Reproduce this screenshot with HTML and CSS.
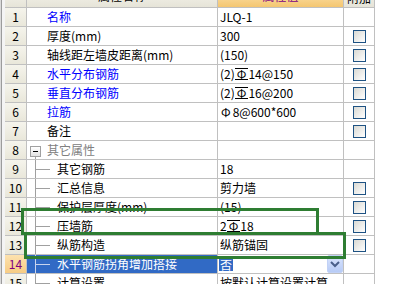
FILE: index.html
```html
<!DOCTYPE html>
<html lang="zh-CN">
<head>
  <meta charset="UTF-8">
  <title>属性编辑</title>
  <link rel="stylesheet" href="styles.css">
</head>
<body>
  <div class="frame">
    <div class="grid">
      <div class="row head">
        <div class="c num"></div>
        <div class="c name">属性名称</div>
        <div class="c val">属性值</div>
        <div class="c chk">附加</div>
      </div>
      <div class="row">
        <div class="c num">1</div>
        <div class="c name blue">名称</div>
        <div class="c val">JLQ-1</div>
        <div class="c chk"></div>
      </div>
      <div class="row">
        <div class="c num">2</div>
        <div class="c name">厚度(mm)</div>
        <div class="c val">300</div>
        <div class="c chk"><span class="box"></span></div>
      </div>
      <div class="row">
        <div class="c num">3</div>
        <div class="c name">轴线距左墙皮距离(mm)</div>
        <div class="c val">(150)</div>
        <div class="c chk"><span class="box"></span></div>
      </div>
      <div class="row">
        <div class="c num">4</div>
        <div class="c name blue">水平分布钢筋</div>
        <div class="c val">(2)<span class="bar">Φ</span>14@150</div>
        <div class="c chk"><span class="box"></span></div>
      </div>
      <div class="row">
        <div class="c num">5</div>
        <div class="c name blue">垂直分布钢筋</div>
        <div class="c val">(2)<span class="bar">Φ</span>16@200</div>
        <div class="c chk"><span class="box"></span></div>
      </div>
      <div class="row">
        <div class="c num">6</div>
        <div class="c name blue">拉筋</div>
        <div class="c val"><span class="phi">Φ</span>8@600*600</div>
        <div class="c chk"><span class="box"></span></div>
      </div>
      <div class="row">
        <div class="c num">7</div>
        <div class="c name">备注</div>
        <div class="c val"></div>
        <div class="c chk"><span class="box"></span></div>
      </div>
      <div class="row">
        <div class="c num">8</div>
        <div class="c name group"><span class="toggle"></span>其它属性</div>
        <div class="c val"></div>
        <div class="c chk"></div>
      </div>
      <div class="row">
        <div class="c num">9</div>
        <div class="c name child">其它钢筋</div>
        <div class="c val">18</div>
        <div class="c chk"></div>
      </div>
      <div class="row">
        <div class="c num">10</div>
        <div class="c name child">汇总信息</div>
        <div class="c val">剪力墙</div>
        <div class="c chk"><span class="box"></span></div>
      </div>
      <div class="row">
        <div class="c num">11</div>
        <div class="c name child">保护层厚度(mm)</div>
        <div class="c val">(15)</div>
        <div class="c chk"><span class="box"></span></div>
      </div>
      <div class="row">
        <div class="c num">12</div>
        <div class="c name child">压墙筋</div>
        <div class="c val">2<span class="bar">Φ</span>18</div>
        <div class="c chk"><span class="box"></span></div>
      </div>
      <div class="row">
        <div class="c num">13</div>
        <div class="c name child">纵筋构造</div>
        <div class="c val">纵筋锚固</div>
        <div class="c chk"><span class="box"></span></div>
      </div>
      <div class="row sel">
        <div class="c num">14</div>
        <div class="c name child">水平钢筋拐角增加搭接</div>
        <div class="c val edit">
          <span class="pick">否</span>
          <span class="drop">
            <svg width="10" height="7" viewBox="0 0 10 7"><polyline points="1,1 5,5 9,1" fill="none" stroke="#4a5f8a" stroke-width="2"/></svg>
          </span>
        </div>
        <div class="c chk"></div>
      </div>
      <div class="row">
        <div class="c num">15</div>
        <div class="c name child">计算设置</div>
        <div class="c val">按默认计算设置计算</div>
        <div class="c chk"></div>
      </div>
    </div>
    <div class="mark mark-a"></div>
    <div class="mark mark-b"></div>
  </div>
</body>
</html>
```

FILE: styles.css
```css
body {
  margin: 0;
  background: #fff;
  font-family: "Noto Sans CJK SC", "DejaVu Sans", sans-serif;
  font-size: 12px;
  color: #000;
  overflow: hidden;
}
.frame {
  position: relative;
  height: 284px;
  overflow: hidden;
}
.grid {
  width: 375px;
  box-sizing: border-box;
  margin-top: -12px;
  padding-left: 5px;
  background: #f4f4f4;
  box-shadow: inset 1px 0 #dadada, inset 2px 0 #9c9c9c;
}
.row {
  display: flex;
  height: 19px;
  box-sizing: border-box;
  border-bottom: 1px solid #c0c0c0;
}
.c {
  box-sizing: border-box;
  height: 18px;
  line-height: 18px;
  border-right: 1px solid #c0c0c0;
  background: #fff;
  white-space: nowrap;
  overflow: hidden;
}
.num {
  width: 22px;
  text-align: center;
  background: linear-gradient(#f5f4ec, #e9e7da);
}
.name {
  width: 191px;
  padding-left: 20px;
}
.val {
  width: 126px;
  padding-left: 2px;
}
.chk {
  width: 31px;
  display: flex;
  align-items: center;
  justify-content: center;
}
.head {
  height: 20px;
}
.head .c {
  height: 19px;
  line-height: 15px;
  text-align: center;
  padding: 0;
  background: linear-gradient(#f6f5ee, #e6e4d8);
}
.head .val {
  color: #800080;
  background: linear-gradient(#fde7b8, #f4c670);
}
.blue {
  color: #0000ff;
}
.box {
  width: 13px;
  height: 13px;
  box-sizing: border-box;
  border: 1px solid #1e5283;
  background: linear-gradient(135deg, #d9d9d3, #ffffff);
}
.bar {
  display: inline-block;
  line-height: 10px;
  padding: 0 2px;
  border-top: 1px solid #000;
  border-bottom: 1px solid #000;
}
.phi {
  padding: 0 2px 0 1px;
}
.group {
  display: flex;
  align-items: center;
  gap: 6px;
  padding-left: 3px;
  color: #808080;
  background: linear-gradient(#a0a0a0, #a0a0a0) 8px 15px / 1px 100% no-repeat, #fff;
}
.toggle {
  width: 11px;
  height: 11px;
  box-sizing: border-box;
  margin-top: 3px;
  border: 1px solid #a0a0a0;
  background: linear-gradient(#000, #000) center / 5px 1px no-repeat, linear-gradient(#ffffff, #e2e2e2);
}
.child {
  padding-left: 30px;
  background:
    linear-gradient(#a0a0a0, #a0a0a0) 8px 0 / 1px 100% no-repeat,
    linear-gradient(#a0a0a0, #a0a0a0) 9px 9px / 14px 1px no-repeat,
    #fff;
}
.sel .num {
  color: #800080;
  background: linear-gradient(#fde2ae, #f7cc84);
}
.sel .name {
  color: #fff;
  background:
    linear-gradient(#c8d4ee, #c8d4ee) 8px 0 / 1px 100% no-repeat,
    linear-gradient(#c8d4ee, #c8d4ee) 9px 9px / 14px 1px no-repeat,
    #316ac5;
}
.edit {
  display: flex;
  align-items: center;
  justify-content: space-between;
  padding-left: 1px;
}
.pick {
  line-height: 13px;
  padding: 0 1px;
  color: #fff;
  background: #316ac5;
}
.drop {
  width: 16px;
  height: 18px;
  box-sizing: border-box;
  display: flex;
  align-items: center;
  justify-content: center;
  border: 1px solid #c2d2f6;
  border-radius: 2px;
  background: linear-gradient(#dbe5fd, #b7cbf6);
}
.mark {
  position: absolute;
  box-sizing: border-box;
  border: 3px solid #2e7d32;
}
.mark-a {
  left: 21px;
  top: 208px;
  width: 298px;
  height: 27px;
}
.mark-b {
  left: 24px;
  top: 232px;
  width: 322px;
  height: 27px;
}
```
